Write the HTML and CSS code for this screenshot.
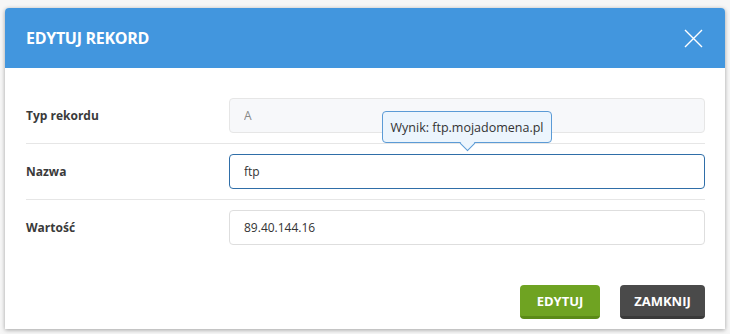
FILE: index.html
```html
<!DOCTYPE html>
<html lang="pl">
<head>
  <meta charset="UTF-8">
  <title>Edytuj rekord</title>
  <link rel="stylesheet" href="styles.css">
</head>
<body>

  <div class="modal">
    <header class="modal-header">
      <h2>EDYTUJ REKORD</h2>
      <button class="close-btn" aria-label="Zamknij">
        <svg width="19" height="19" viewBox="0 0 19 19">
          <path d="M1 1 L18 18 M18 1 L1 18" stroke="#fff" stroke-width="1.4" fill="none"/>
        </svg>
      </button>
    </header>

    <div class="modal-body">
      <div class="form-row">
        <label>Typ rekordu</label>
        <div class="field">
          <input type="text" value="A" disabled>
        </div>
      </div>

      <div class="form-row">
        <label>Nazwa</label>
        <div class="field">
          <input type="text" value="ftp" class="focused">
          <!-- podpowiedź nad polem -->
          <div class="hint">Wynik: ftp.mojadomena.pl</div>
        </div>
      </div>

      <div class="form-row last">
        <label>Wartość</label>
        <div class="field">
          <input type="text" value="89.40.144.16">
        </div>
      </div>
    </div>

    <div class="modal-footer">
      <button class="btn btn-green">EDYTUJ</button>
      <button class="btn btn-dark">ZAMKNIJ</button>
    </div>
  </div>

</body>
</html>
```

FILE: styles.css
```css
body {
  margin: 0;
  padding: 8px 5px 0 5px;
  font-family: "Open Sans", Arial, sans-serif;
  background-color: #f6f6f6;
  height: 334px;
  box-sizing: border-box;
  overflow: hidden;
}

.modal {
  width: 720px;
  height: 321px;
  background-color: white;
  border-radius: 4px 4px 0 0;
  box-shadow: 0 1px 4px rgba(0, 0, 0, 0.35);
  display: flex;
  flex-direction: column;
}

.modal-header {
  background-color: #4296de;
  height: 60px;
  padding: 0 21px;
  display: flex;
  justify-content: space-between;
  align-items: center;
  border-radius: 4px 4px 0 0;
}

.modal-header h2 {
  margin: 0;
  color: white;
  font-size: 16px;
  font-weight: 700;
  letter-spacing: -0.3px;
}

.close-btn {
  background: transparent;
  border: none;
  padding: 0;
  margin-right: 1px;
  cursor: pointer;
  display: flex;
}

.modal-body {
  padding: 20px 20px 0 21px;
}

.form-row {
  display: flex;
  align-items: center;
  padding: 10px 0;
  border-bottom: 1px solid #e6e6e6;
}

.form-row.last {
  border-bottom: none;
}

.form-row label {
  width: 203px;
  font-size: 12px;
  font-weight: 700;
  color: #3a3a3a;
}

.field {
  flex: 1;
  position: relative;
}

.field input {
  width: 100%;
  height: 35px;
  box-sizing: border-box;
  border: 1px solid #dedede;
  border-radius: 4px;
  padding: 0 14px;
  font-family: "Open Sans", Arial, sans-serif;
  font-size: 12px;
  color: #333;
  background-color: white;
  outline: none;
}

.field input:disabled {
  background-color: #f7f8fa;
  border-color: #e6e6e6;
  color: #888;
}

.field input.focused {
  border-color: #2f6ea8;
}

.hint {
  position: absolute;
  left: 153px;
  top: -43px;
  width: 170px;
  height: 32px;
  box-sizing: border-box;
  background-color: #ecf5fd;
  border: 1px solid #5b9bd6;
  border-radius: 4px;
  font-size: 12.5px;
  color: #333;
  display: flex;
  align-items: center;
  justify-content: center;
}

.hint::after {
  content: "";
  position: absolute;
  left: 79px;
  bottom: -7px;
  width: 10px;
  height: 10px;
  background-color: #ecf5fd;
  border-right: 1px solid #5b9bd6;
  border-bottom: 1px solid #5b9bd6;
  transform: rotate(45deg);
}

.modal-footer {
  display: flex;
  justify-content: flex-end;
  gap: 20px;
  padding: 30px 20px 0 0;
}

.btn {
  height: 34px;
  border: none;
  border-radius: 4px;
  color: white;
  font-family: "Open Sans", Arial, sans-serif;
  font-size: 13px;
  font-weight: 700;
  cursor: pointer;
}

.btn-green {
  width: 80px;
  background-color: #6fa322;
  border-bottom: 3px solid #5b8a17;
}

.btn-dark {
  width: 85px;
  background-color: #4a4a4a;
  border-bottom: 3px solid #3a3a3a;
}
```
